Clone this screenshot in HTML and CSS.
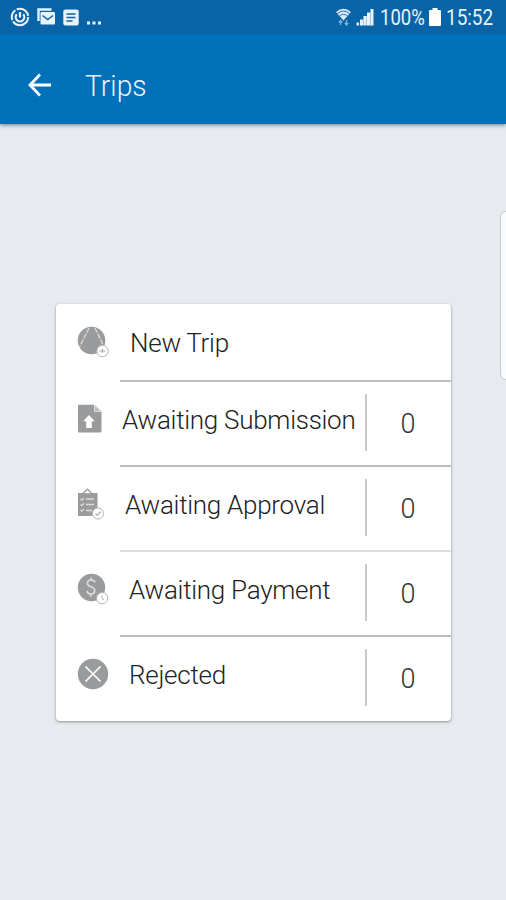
FILE: index.html
```html
<!DOCTYPE html>
<html lang="en">
<head>
<meta charset="utf-8">
<title>Trips</title>
<link rel="stylesheet" href="styles.css">
</head>
<body>
<div class="screen">
  <header class="top">
    <div class="status">
      <div class="notifications">
        <svg width="20" height="20" viewBox="0 0 20 20" fill="none" stroke="#e8f3fc"><circle cx="10" cy="10" r="8.2" stroke-width="2" stroke-dasharray="21 1.5 11 1.5 15 1.5"/><path d="M6.800 7.200a4.300 4.300 0 1 0 6.400 0M10 5v5.500" stroke-width="2.200"/></svg>
        <svg width="19" height="18" viewBox="0 0 19 18"><path d="M1.500 13V1.500h13" fill="none" stroke="#e8f3fc" stroke-width="2.400"/><rect x="3.500" y="4" width="14.500" height="12.500" rx="1" fill="#e8f3fc"/><path d="M5.500 7.500l5.200 4L16 7.500" fill="none" stroke="#0864a6" stroke-width="1.500"/></svg>
        <svg width="16" height="17" viewBox="0 0 16 17"><rect x=".3" y=".5" width="15.400" height="16" rx="2" fill="#e8f3fc"/><path d="M3.500 5h9M3.500 8.500h9M3.500 12h6" stroke="#0864a6" stroke-width="1.500"/></svg>
        <svg class="more" width="16" height="4" viewBox="0 0 16 4" fill="#e8f3fc"><path d="M1 .5h3v3H1zM6.500.5h3v3h-3zM12 .5h3v3h-3z"/></svg>
      </div>
      <div class="system">
        <svg class="wifi" width="17" height="18" viewBox="0 0 17 18"><path d="M1 4Q8.500-2.500 16 4L8.500 12.500Z" fill="#dbe9f5"/><path d="M2.500 5.500Q8.500.5 14.500 5.500M4.500 8Q8.500 4.500 12.500 8" fill="none" stroke="#0864a6" stroke-width=".9"/><path d="M5.500 17v-4M3.800 14.500l1.700-2 1.700 2M11.500 12v4.500M9.800 15l1.700 2 1.700-2" fill="none" stroke="#7eb2d9" stroke-width="1.300"/></svg>
        <svg class="signal" width="18" height="18" viewBox="0 0 18 18" fill="#e8f3fc"><path d="M.5 14.500h2.500V17.500H.5zM4 11.500h3.200v6H4zM7.500 8h3.200v9.500H7.500zM11 4.500h3.200v13H11zM14.500 1h3v16.500h-3z"/></svg>
        <span class="percent">100%</span>
        <svg class="battery" width="12" height="18" viewBox="0 0 12 18"><path d="M3.500 0h5v2H11q1 0 1 1v14q0 1-1 1H1q-1 0-1-1V3q0-1 1-1h2.500z" fill="#fff"/></svg>
        <span class="clock">15:52</span>
      </div>
    </div>
    <div class="appbar">
      <svg class="back" width="24" height="24" viewBox="0 0 24 24"><path d="M24 12H3.500M13 1.500L3 12l10 10.500" fill="none" stroke="#fff" stroke-width="2.800"/></svg>
      <h1>Trips</h1>
    </div>
  </header>
  <main>
    <div class="card">
      <div class="row first">
        <svg class="icon" width="32" height="32" viewBox="0 0 32 32"><circle cx="14.500" cy="14.500" r="13.800" fill="#999b9d"/><path d="M12 2L2.500 21M18 2L27 21" stroke="#ddd" stroke-width="1.300" stroke-dasharray="5 1.500"/><circle cx="25.500" cy="25" r="5.700" fill="#fff" stroke="#b4b4b4"/><path d="M22.500 25h6M25.500 23v4" stroke="#aaa" stroke-width="1.200"/></svg>
        <div class="body"><span class="label new">New Trip</span></div>
      </div>
      <div class="row">
        <svg class="icon" width="32" height="32" viewBox="0 0 32 32"><path d="M2.200.7H17.500L24.500 7.500V27q0 1.500-1.500 1.500H2.200Q1 28.500 1 27V2Q1 .7 2.200.7z" fill="#999b9d"/><path d="M17.500 1v6.500H24z" fill="#bbb" stroke="#eee" stroke-width=".8"/><path d="M12 11l5.800 6.300h-3V24H9.200v-6.700h-3z" fill="#fff"/></svg>
        <div class="body"><span class="label submission">Awaiting Submission</span><span class="count">0</span></div>
      </div>
      <div class="row light">
        <svg class="icon raised" width="32" height="32" viewBox="0 0 32 32"><path d="M1 5h19.500v23H1z" fill="#999b9d"/><path d="M5.500 6L10.500 1.200 15.500 6z" fill="#fff" stroke="#999b9d" stroke-width="1.300"/><path d="M3.500 11l1.200 1.200L7 10M3.500 16.500l1.200 1.200L7 15.500M3.500 22l1.200 1.200L7 21M9 11h8M9 16.500h8M9 22.500h6" fill="none" stroke="#ddd" stroke-width="1.300"/><circle cx="21" cy="25.500" r="5.600" fill="#fff" stroke="#b4b4b4"/><path d="M18.500 25.500l1.700 1.700 3.600-3.500" fill="none" stroke="#aaa" stroke-width="1.200"/></svg>
        <div class="body"><span class="label approval">Awaiting Approval</span><span class="count">0</span></div>
      </div>
      <div class="row">
        <svg class="icon raised" width="32" height="32" viewBox="0 0 32 32"><circle cx="14.500" cy="14.500" r="13.700" fill="#999b9d"/><path d="M18 9.500Q17.500 7 14 7t-3.500 3.200Q10.500 13 14 13.800T17.700 18Q17.500 21 14 21t-4-3M14 4.500V7M14 21v2.500" fill="none" stroke="#ddd" stroke-width="1.600"/><circle cx="25.200" cy="25.200" r="5.600" fill="#fff" stroke="#b4b4b4"/><path d="M25 22.300V25.500l2 1.200" fill="none" stroke="#aaa"/></svg>
        <div class="body"><span class="label payment">Awaiting Payment</span><span class="count">0</span></div>
      </div>
      <div class="row last">
        <svg class="icon raised" width="32" height="32" viewBox="0 0 32 32"><circle cx="16" cy="16" r="15.200" fill="#999b9d"/><path d="M8.500 8.500l15 15M23.500 8.500l-15 15" stroke="#fff" stroke-width="1.700"/></svg>
        <div class="body"><span class="label rejected">Rejected</span><span class="count">0</span></div>
      </div>
    </div>
  </main>
  <div class="edge-handle"></div>
</div>
</body>
</html>
```
FILE: styles.css
```css
* { box-sizing: border-box; }
body { margin: 0; font-family: Roboto, "Liberation Sans", sans-serif; }
svg { display: block; flex: none; }
.screen { position: relative; width: 506px; height: 900px; overflow: hidden; background: #e7ebf0; display: flex; flex-direction: column; }
.top { height: 124px; flex: none; background: #0070b9; box-shadow: 0 1px 4px rgba(0,0,0,.5); }
.status { height: 34px; display: flex; justify-content: space-between; background: #0864a6; color: #e8f3fc; padding: 0 13px 0 10px; }
.notifications { display: flex; align-items: center; gap: 7px; }
.more { margin-top: 12px; }
.system { display: flex; align-items: center; font-size: 22px; line-height: 34px; padding-top: 2px; }
.wifi { margin-top: -2px; }
.signal { margin-left: 4px; margin-top: -2px; }
.percent { width: 45px; margin-left: 6px; transform: scaleX(.84); transform-origin: left; }
.battery { margin-left: 4px; margin-top: -2px; }
.clock { width: 47px; margin-left: 5px; transform: scaleX(.86); transform-origin: left; }
.appbar { height: 90px; display: flex; align-items: center; padding: 12px 0 0 27px; color: #e8f3fc; }
h1 { margin: 2px 0 0 34px; font-size: 30px; font-weight: 300; line-height: 36px; transform: scaleX(.94); transform-origin: left; }
main { padding: 180px 55px 0 56px; }
.card { height: 417px; background: #fff; border-radius: 4px; box-shadow: 0 1px 3px rgba(0,0,0,.4); }
.row { display: flex; height: 85px; padding-left: 21px; }
.first { height: 78px; }
.icon { margin-top: 22px; }
.raised { margin-top: 21px; }
.body { margin-left: 11px; flex: 1; display: flex; border-bottom: 2px solid #bebebe; }
.light .body { border-color: #dedede; }
.last .body { border: 0; }
.label { flex: 1; white-space: nowrap; font-size: 26px; font-weight: 300; letter-spacing: -.27px; line-height: 32px; color: #222; padding-top: 22px; }
.new { padding-left: 10px; padding-top: 23px; }
.submission { padding-left: 2px; }
.approval { padding-left: 5px; }
.payment { padding-left: 9px; }
.rejected { padding-left: 9px; }
.count { width: 86px; height: 57px; margin-top: 12px; border-left: 2px solid #c8c8c8; text-align: center; font-size: 27px; font-weight: 300; line-height: 61px; color: #333; padding-right: 2px; }
.edge-handle { position: absolute; left: 500px; top: 211px; width: 20px; height: 169px; background: #f8fafb; border: 1px solid #c5c9cd; border-radius: 6px; }
```
